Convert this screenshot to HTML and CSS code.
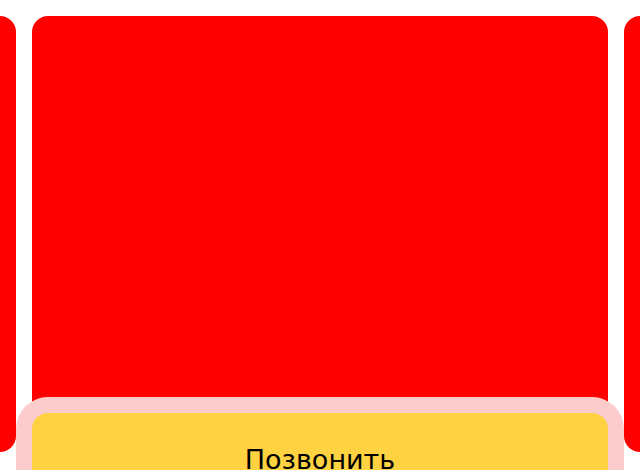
FILE: index.html
```html
<!DOCTYPE html>
<html lang="ru">
<head>
<meta charset="utf-8">
<link rel="stylesheet" href="styles.css">
</head>
<body>
<div class="page">
  <div class="carousel">
    <div class="card"></div>
    <div class="card"></div>
    <div class="card"></div>
  </div>
  <div class="action">
    <button class="call">Позвонить</button>
  </div>
</div>
</body>
</html>
```
FILE: styles.css
```css
html, body {
  margin: 0;
  padding: 0;
  background: #fff;
}
.page {
  position: relative;
  width: 640px;
  height: 470px;
  overflow: hidden;
  font-family: "DejaVu Sans", sans-serif;
}
.carousel {
  display: flex;
  justify-content: center;
  gap: 16px;
  padding-top: 16px;
}
.card {
  flex: 0 0 576px;
  height: 436px;
  background: #ff0000;
  border-radius: 16px;
}
.action {
  position: absolute;
  left: 16px;
  top: 397px;
  width: 576px;
  padding: 16px;
  background: #fccccc;
  border-radius: 32px;
}
.call {
  display: flex;
  justify-content: center;
  align-items: flex-start;
  width: 100%;
  height: 90px;
  border: none;
  border-radius: 16px;
  background: #ffd242;
  color: #000;
  font-family: "DejaVu Sans", sans-serif;
  font-size: 27px;
  line-height: 30px;
  padding: 32px 0 0;
  text-align: center;
}
```
